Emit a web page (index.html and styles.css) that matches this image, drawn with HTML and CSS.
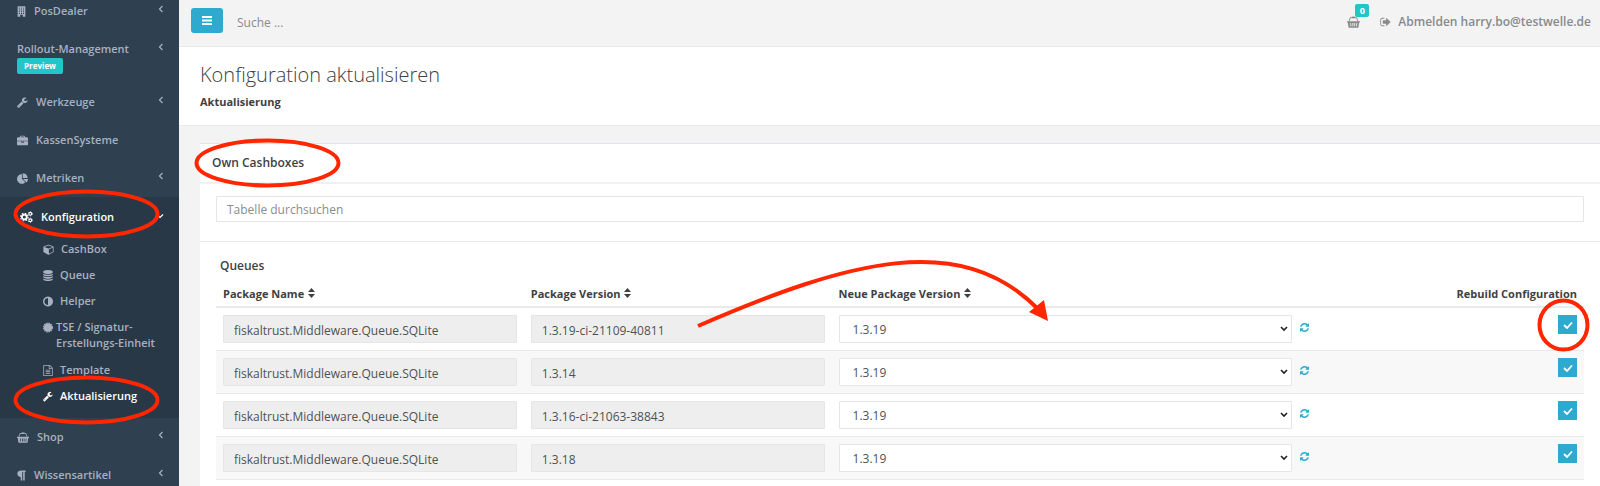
FILE: index.html
```html
<!DOCTYPE html>
<html lang="de">
<head>
<meta charset="utf-8">
<title>Konfiguration aktualisieren</title>
<link rel="stylesheet" href="styles.css">
</head>
<body>
<svg class="defs" aria-hidden="true">
  <symbol id="building" viewBox="0 0 14 16"><path fill-rule="evenodd" d="M1 0h12v16H9v-3H5v3H1zM3 2v1.500h1.500V2zm3.200 0v1.500h1.500V2zm3.200 0v1.500h1.500V2zM3 4.800v1.500h1.500V4.800zm3.200 0v1.500h1.500V4.800zm3.200 0v1.500h1.500V4.800zM3 7.600v1.500h1.500V7.600zm3.200 0v1.500h1.500V7.600zm3.200 0v1.500h1.500V7.600zM3 10.400v1.500h1.500v-1.500zm3.200 0v1.500h1.500v-1.500zm3.200 0v1.500h1.500v-1.500z"/></symbol>
  <symbol id="wrench" viewBox="64 64 1728 1728"><path d="M448 1472q0-26-19-45t-45-19-45 19-19 45 19 45 45 19 45-19 19-45zm644-420l-682 682q-37 37-90 37-52 0-91-37l-106-108q-38-36-38-90 0-53 38-91l681-681q39 98 114.500 173.500t173.500 114.500zm634-435q0 39-23 106-47 134-164.500 217.500t-258.500 83.500q-185 0-316.500-131.500t-131.500-316.500 131.500-316.500 316.500-131.500q58 0 121.500 16.500t107.500 46.500q16 11 16 28t-16 28l-293 169v224l193 107q5-3 79-48.500t135.500-81 70.500-35.500q15 0 23.500 10t8.500 25z"/></symbol>
  <symbol id="briefcase" viewBox="0 -128 1792 1792"><path d="M640 256h512v-128h-512v128zm1152 640v480q0 66-47 113t-113 47h-1472q-66 0-113-47t-47-113v-480h672v160q0 26 19 45t45 19h320q26 0 45-19t19-45v-160h672zm-768 0v128h-256v-128h256zm768-480v384h-1792v-384q0-66 47-113t113-47h352v-160q0-40 28-68t68-28h576q40 0 68 28t28 68v160h352q66 0 113 47t47 113z"/></symbol>
  <symbol id="pie" viewBox="0 -32 1728 1728"><path d="M768 890l546 546q-106 108-247.500 168t-298.500 60q-209 0-385.500-103t-279.500-279.500-103-385.500 103-385.500 279.500-279.500 385.500-103v762zm187 6h773q0 157-60 298.500t-168 247.500zm709-128h-768v-768q209 0 385.500 103t279.500 279.500 103 385.500z"/></symbol>
  <symbol id="cogs" viewBox="0 0 24 22"><g fill="none" stroke="currentColor"><circle cx="8" cy="11" r="4.500" stroke-width="3.400"/><circle cx="8" cy="11" r="7" stroke-width="2" stroke-dasharray="2.900 2.600"/><circle cx="19" cy="5" r="2.600" stroke-width="2"/><circle cx="19" cy="5" r="4" stroke-width="1.200" stroke-dasharray="2 2.190"/><circle cx="19" cy="17" r="2.600" stroke-width="2"/><circle cx="19" cy="17" r="4" stroke-width="1.200" stroke-dasharray="2 2.190"/></g></symbol>
  <symbol id="cube" viewBox="-32 32 1728 1792"><path d="M896 1629l640-349v-636l-640 233v752zm-64-865l698-254-698-254-698 254zm832-252v768q0 35-18 65t-49 47l-704 384q-28 16-61 16t-61-16l-704-384q-31-17-49-47t-18-65v-768q0-40 23-73t61-47l704-256q22-8 44-8t44 8l704 256q38 14 61 47t23 73z"/></symbol>
  <symbol id="database" viewBox="128 0 1536 1792"><path d="M896 768q237 0 443-43t325-127v170q0 69-103 128t-280 93.500-385 34.500-385-34.500-280-93.500-103-128v-170q119 84 325 127t443 43zm0 768q237 0 443-43t325-127v170q0 69-103 128t-280 93.500-385 34.500-385-34.500-280-93.500-103-128v-170q119 84 325 127t443 43zm0-384q237 0 443-43t325-127v170q0 69-103 128t-280 93.500-385 34.500-385-34.500-280-93.500-103-128v-170q119 84 325 127t443 43zm0-1152q208 0 385 34.500t280 93.500 103 128v128q0 69-103 128t-280 93.500-385 34.500-385-34.500-280-93.500-103-128v-128q0-69 103-128t280-93.500 385-34.500z"/></symbol>
  <symbol id="adjust" viewBox="128 128 1536 1536"><path d="M896 1440v-1088q-148 0-273 73t-198 198-73 273 73 273 198 198 273 73zm768-544q0 209-103 385.500t-279.500 279.500-385.500 103-385.500-103-279.500-279.500-103-385.500 103-385.500 279.500-279.500 385.500-103 385.500 103 279.500 279.500 103 385.500z"/></symbol>
  <symbol id="certificate" viewBox="0 0 16 16"><circle cx="8" cy="8" r="6.500"/><circle cx="8" cy="8" r="7" fill="none" stroke="currentColor" stroke-width="2" stroke-dasharray="2.400 1.265"/></symbol>
  <symbol id="file" viewBox="128 0 1536 1792"><path d="M1596 380q28 28 48 76t20 88v1152q0 40-28 68t-68 28h-1344q-40 0-68-28t-28-68v-1600q0-40 28-68t68-28h896q40 0 88 20t76 48zm-444-244v376h376q-10-29-22-41l-313-313q-12-12-41-22zm384 1528v-1024h-416q-40 0-68-28t-28-68v-416h-768v1536h1280zm-1024-864q0-14 9-23t23-9h704q14 0 23 9t9 23v64q0 14-9 23t-23 9h-704q-14 0-23-9t-9-23v-64zm736 224q14 0 23 9t9 23v64q0 14-9 23t-23 9h-704q-14 0-23-9t-9-23v-64q0-14 9-23t23-9h704zm0 256q14 0 23 9t9 23v64q0 14-9 23t-23 9h-704q-14 0-23-9t-9-23v-64q0-14 9-23t23-9h704z"/></symbol>
  <symbol id="basket" viewBox="0 0 24 22"><path fill-rule="evenodd" d="M0 9.500h24v2.500h-1.500L21 21.500H3L1.500 12H0zM6 13l.5 6h1.600l-.5-6zm4 0v6h1.600v-6zm3.400 0v6H15v-6zm4 0l-.5 6h1.600l.5-6z"/><path d="M4 9.500L6 3h12l2 6.500" fill="none" stroke="currentColor" stroke-width="1.700"/><path d="M9 1h6v3H9z"/></symbol>
  <symbol id="paragraph" viewBox="260 64 1280 1664"><path d="M1534 189v73q0 29-18.500 61t-42.500 32q-50 0-54 1-26 6-32 31-3 11-3 64v1152q0 25-18 43t-43 18h-108q-25 0-43-18t-18-43v-1218h-143v1218q0 25-17.500 43t-43.500 18h-108q-26 0-43.500-18t-17.500-43v-496q-147-12-245-59-126-58-192-179-64-117-64-259 0-166 88-286 88-118 209-159 111-37 417-37h479q25 0 43 18t18 43z"/></symbol>
  <symbol id="chevron" viewBox="0 0 6 8"><path d="M4.500 1L1.500 4l3 3" fill="none" stroke="currentColor" stroke-width="1.200"/></symbol>
  <symbol id="chevron-down" viewBox="0 0 8 6"><path d="M1 1.500l3 3 3-3" fill="none" stroke="currentColor" stroke-width="1.200"/></symbol>
  <symbol id="bars" viewBox="0 0 12 11"><path d="M1 1h10v2H1zM1 4.500h10v2H1zM1 8h10v2H1z"/></symbol>
  <symbol id="sign-out" viewBox="64 128 1600 1536"><path d="M704 1440q0 4 1 20t.5 26.500-3 23.500-10 19.500-20.500 6.500h-320q-119 0-203.500-84.500t-84.500-203.500v-704q0-119 84.500-203.500t203.500-84.500h320q13 0 22.500 9.500t9.500 22.500q0 4 1 20t.5 26.500-3 23.500-10 19.500-20.500 6.500h-320q-66 0-113 47t-47 113v704q0 66 47 113t113 47h312l11.500 1 11.500 3 8 5.500 7 9 2 13.500zm928-544q0 26-19 45l-544 544q-19 19-45 19t-45-19-19-45v-288h-448q-26 0-45-19t-19-45v-384q0-26 19-45t45-19h448v-288q0-26 19-45t45-19 45 19l544 544q19 19 19 45z"/></symbol>
  <symbol id="sort" viewBox="0 0 7 10"><path d="M0 4l3.500-4L7 4zM0 6h7l-3.500 4z"/></symbol>
  <symbol id="refresh" viewBox="128 128 1536 1536"><path d="M1639 1056q0 5-1 7-64 268-268 434.500t-478 166.500q-146 0-282.500-55t-243.500-157l-129 129q-19 19-45 19t-45-19-19-45v-448q0-26 19-45t45-19h448q26 0 45 19t19 45-19 45l-137 137q71 66 161 102t187 36q134 0 250-65t186-179q11-17 53-117 8-23 30-23h192q13 0 22.500 9.500t9.500 22.500zm25-800v448q0 26-19 45t-45 19h-448q-26 0-45-19t-19-45 19-45l138-138q-148-137-349-137-134 0-250 65t-186 179q-11 17-53 117-8 23-30 23h-199q-13 0-22.500-9.500t-9.500-22.500v-7q65-268 270-434.500t480-166.500q146 0 284 55.500t245 156.500l130-129q19-19 45-19t45 19 19 45z"/></symbol>
</svg>

<div class="app">
  <nav class="sidebar">
    <ul class="menu">
      <li class="first"><a href="#"><svg class="icon narrow"><use href="#building"/></svg><span>PosDealer</span><svg class="arrow"><use href="#chevron"/></svg></a></li>
      <li class="tagged"><a href="#"><span>Rollout-Management<br><span class="label">Preview</span></span><svg class="arrow"><use href="#chevron"/></svg></a></li>
      <li><a href="#"><svg class="icon"><use href="#wrench"/></svg><span>Werkzeuge</span><svg class="arrow"><use href="#chevron"/></svg></a></li>
      <li><a href="#"><svg class="icon"><use href="#briefcase"/></svg><span>KassenSysteme</span></a></li>
      <li><a href="#"><svg class="icon"><use href="#pie"/></svg><span>Metriken</span><svg class="arrow"><use href="#chevron"/></svg></a></li>
      <li class="active">
        <a href="#"><svg class="icon cogs"><use href="#cogs"/></svg><span>Konfiguration</span><svg class="arrow down"><use href="#chevron-down"/></svg></a>
        <ul class="submenu">
          <li><a href="#"><svg class="icon"><use href="#cube"/></svg><span>CashBox</span></a></li>
          <li><a href="#"><svg class="icon small"><use href="#database"/></svg><span>Queue</span></a></li>
          <li><a href="#"><svg class="icon small"><use href="#adjust"/></svg><span>Helper</span></a></li>
          <li><a href="#" class="long"><svg class="icon small"><use href="#certificate"/></svg><span>TSE / Signatur-<br>Erstellungs-Einheit</span></a></li>
          <li><a href="#"><svg class="icon small"><use href="#file"/></svg><span>Template</span></a></li>
          <li class="current"><a href="#"><svg class="icon small"><use href="#wrench"/></svg><span>Aktualisierung</span></a></li>
        </ul>
      </li>
      <li><a href="#"><svg class="icon wide"><use href="#basket"/></svg><span>Shop</span><svg class="arrow"><use href="#chevron"/></svg></a></li>
      <li><a href="#"><svg class="icon narrow"><use href="#paragraph"/></svg><span>Wissensartikel</span><svg class="arrow"><use href="#chevron"/></svg></a></li>
    </ul>
  </nav>

  <main class="main">
    <header class="topbar">
      <button class="toggle" type="button" aria-label="Menü"><svg><use href="#bars"/></svg></button>
      <input class="search" type="text" placeholder="Suche ..." aria-label="Suche">
      <a class="cart" href="#" aria-label="Warenkorb"><svg><use href="#basket"/></svg><span class="count">0</span></a>
      <a class="logout" href="#"><svg><use href="#sign-out"/></svg>Abmelden harry.bo@testwelle.de</a>
    </header>

    <section class="heading">
      <h1>Konfiguration aktualisieren</h1>
      <strong>Aktualisierung</strong>
    </section>

    <section class="panel">
      <h2 class="panel-title">Own Cashboxes</h2>
      <div class="filter"><input type="text" placeholder="Tabelle durchsuchen" aria-label="Tabelle durchsuchen"></div>
      <div class="content">
        <h3>Queues</h3>
        <table>
          <colgroup><col class="c-name"><col class="c-version"><col class="c-new"><col></colgroup>
          <thead><tr>
            <th>Package Name <svg class="sort"><use href="#sort"/></svg></th>
            <th>Package Version <svg class="sort"><use href="#sort"/></svg></th>
            <th>Neue Package Version <svg class="sort"><use href="#sort"/></svg></th>
            <th class="end">Rebuild Configuration</th>
          </tr></thead>
          <tbody>
            <tr>
              <td><input class="field" disabled value="fiskaltrust.Middleware.Queue.SQLite" aria-label="Package Name"></td>
              <td><input class="field" disabled value="1.3.19-ci-21109-40811" aria-label="Package Version"></td>
              <td><div class="pick"><select aria-label="Neue Package Version"><option>1.3.19</option></select><button type="button" aria-label="Aktualisieren"><svg><use href="#refresh"/></svg></button></div></td>
              <td class="end"><input class="check" type="checkbox" checked aria-label="Rebuild Configuration"></td>
            </tr>
            <tr>
              <td><input class="field" disabled value="fiskaltrust.Middleware.Queue.SQLite" aria-label="Package Name"></td>
              <td><input class="field" disabled value="1.3.14" aria-label="Package Version"></td>
              <td><div class="pick"><select aria-label="Neue Package Version"><option>1.3.19</option></select><button type="button" aria-label="Aktualisieren"><svg><use href="#refresh"/></svg></button></div></td>
              <td class="end"><input class="check" type="checkbox" checked aria-label="Rebuild Configuration"></td>
            </tr>
            <tr>
              <td><input class="field" disabled value="fiskaltrust.Middleware.Queue.SQLite" aria-label="Package Name"></td>
              <td><input class="field" disabled value="1.3.16-ci-21063-38843" aria-label="Package Version"></td>
              <td><div class="pick"><select aria-label="Neue Package Version"><option>1.3.19</option></select><button type="button" aria-label="Aktualisieren"><svg><use href="#refresh"/></svg></button></div></td>
              <td class="end"><input class="check" type="checkbox" checked aria-label="Rebuild Configuration"></td>
            </tr>
            <tr>
              <td><input class="field" disabled value="fiskaltrust.Middleware.Queue.SQLite" aria-label="Package Name"></td>
              <td><input class="field" disabled value="1.3.18" aria-label="Package Version"></td>
              <td><div class="pick"><select aria-label="Neue Package Version"><option>1.3.19</option></select><button type="button" aria-label="Aktualisieren"><svg><use href="#refresh"/></svg></button></div></td>
              <td class="end"><input class="check" type="checkbox" checked aria-label="Rebuild Configuration"></td>
            </tr>
          </tbody>
        </table>
      </div>
    </section>
  </main>

  <svg class="marks" viewBox="0 0 1600 486" aria-hidden="true">
    <g fill="none" stroke="#ff2600" stroke-width="4">
      <ellipse cx="86.500" cy="214" rx="71" ry="22.500"/>
      <ellipse cx="86.500" cy="400" rx="71" ry="22.500"/>
      <ellipse cx="267.500" cy="163" rx="71" ry="22.500"/>
      <ellipse cx="1563.500" cy="325" rx="24" ry="24.500"/>
      <path d="M698 326C850 260 960 231 1037 308"/>
    </g>
    <path fill="#ff2600" d="M1048 321l-19-9 15-12z"/>
  </svg>
</div>
</body>
</html>
```
FILE: styles.css
```css
* { box-sizing: border-box; }

body {
  margin: 0;
  background: #f3f3f4;
  color: #4f5254;
  font: 12px/16px "Open Sans", sans-serif;
}

a { color: inherit; text-decoration: none; }
ul { list-style: none; margin: 0; padding: 0; }
h1, h2, h3 { margin: 0; }
svg { fill: currentColor; flex: none; }
input, select, button { font: inherit; color: inherit; }

.defs { position: absolute; width: 0; height: 0; }

.app {
  position: relative;
  display: flex;
  height: 100vh;
  overflow: hidden;
}

/* Sidebar */
.sidebar {
  flex: none;
  width: 179px;
  background: #2f4050;
  color: #a7b1c2;
  font-size: 11px;
  font-weight: 600;
}

.menu a {
  display: flex;
  align-items: flex-start;
  gap: 8px;
  padding: 11px 15px 11px 17px;
}

.menu .first > a { padding-top: 3px; }
.menu .tagged > a { padding-bottom: 9px; }
.icon { width: 11px; height: 11px; margin-top: 3px; }
.icon.narrow { width: 9px; }
.icon.small { width: 10px; }
.icon.wide { width: 12px; }
.icon.cogs { width: 13px; height: 12px; margin-top: 2px; }
.arrow { width: 6px; height: 8px; margin: 2px 0 0 auto; }
.arrow.down { width: 8px; height: 6px; margin-top: 4px; }

.label {
  display: inline-block;
  padding: 0 7px;
  border-radius: 2px;
  background: #23c6c8;
  color: #fff;
  font-size: 8px;
  font-weight: 700;
  line-height: 16px;
}

.active { background: #293846; padding: 1px 0 9px; }
.active > a { color: #fff; padding-left: 20px; }
.submenu a { gap: 7px; padding: 5px 5px 5px 43px; }
.submenu .long { gap: 3px; padding-bottom: 6px; }
.submenu .current { color: #fff; }

/* Top bar */
.main { flex: 1; min-width: 0; }

.topbar {
  display: flex;
  align-items: center;
  height: 47px;
  padding: 0 9px 6px 12px;
  border-bottom: 1px solid #e7eaec;
  color: #888a8c;
}

.toggle {
  display: flex;
  align-items: center;
  justify-content: center;
  width: 32px;
  height: 25px;
  padding: 0;
  border: 0;
  border-radius: 3px;
  background: #2eaacf;
  color: #fff;
}

.toggle svg { width: 12px; height: 11px; }

.search {
  flex: 1;
  min-width: 0;
  margin-top: 5px;
  padding: 0 14px;
  border: 0;
  background: none;
}

input::placeholder { color: #8a8c8e; opacity: 1; }

.cart { position: relative; margin: 4px 20px 0 0; line-height: 0; }
.cart svg { width: 13px; height: 12px; }

.count {
  position: absolute;
  left: 8px;
  bottom: 11px;
  width: 14px;
  border-radius: 2px;
  background: #23c6c8;
  color: #fff;
  font-size: 9px;
  font-weight: 700;
  line-height: 13px;
  text-align: center;
}

.logout {
  display: flex;
  align-items: center;
  gap: 7px;
  margin-top: 4px;
  font-weight: 600;
}

.logout svg { width: 11px; height: 10px; }

/* Page heading */
.heading {
  padding: 14px 21px 15px;
  border-bottom: 1px solid #e7eaec;
  background: #fff;
  color: #3e4144;
}

.heading h1 {
  margin-bottom: 5px;
  font-size: 20px;
  font-weight: 300;
  line-height: 28px;
}

.heading strong { display: block; font-size: 11px; font-weight: 700; }

/* Panel */
.panel {
  margin: 17px 0 0 21px;
  border-top: 1px solid #e0e3e8;
  background: #fff;
}

.panel-title {
  padding: 11px 12px;
  border-bottom: 2px solid #f1f1f2;
  color: #3e4144;
  font-size: 12px;
  font-weight: 600;
}

.filter { padding: 12px 16px 19px; border-bottom: 1px solid #e7eaec; }

.filter input {
  display: block;
  width: 100%;
  height: 26px;
  padding: 0 10px;
  border: 1px solid #e5e6e7;
  background: #fff;
}

.content { padding: 16px 16px 14px; }
.content h3 { padding: 0 4px; font-size: 12px; font-weight: 600; color: #3e4144; }

table { width: 100%; border-collapse: collapse; table-layout: fixed; }
.c-name, .c-version { width: 22.5%; }
.c-new { width: 35.5%; }
th { padding: 12px 7px 4px; border-bottom: 2px solid #e9eaeb; color: #3e4144; font-size: 11px; font-weight: 700; text-align: left; }
td { padding: 7px; border-bottom: 1px solid #e7eaec; vertical-align: top; }
tbody tr:nth-child(even) { background: #f8f8f8; }
.end { text-align: right; }
.sort { width: 7px; height: 10px; margin-left: 1px; }

.field, .pick select {
  display: block;
  width: 100%;
  height: 28px;
  padding: 2px 10px 0;
  border: 1px solid #e5e6e7;
  border-radius: 1px;
}

.field { background: #eee; color: #4f5254; }
.pick { display: flex; gap: 8px; }

.pick select {
  flex: 1;
  appearance: none;
  padding: 2px 13px 0;
  background: #fff url("data:image/svg+xml,%3Csvg xmlns='http://www.w3.org/2000/svg' viewBox='0 0 8 6'%3E%3Cpath d='M1 1l3 3 3-3' fill='none' stroke='%23222' stroke-width='1.600'/%3E%3C/svg%3E") no-repeat right 3px center / 8px 6px;
}

.pick button {
  display: flex;
  padding: 8px 1px 0 0;
  border: 0;
  background: none;
  color: #2eaacf;
}

.pick button svg { width: 9px; height: 9px; }

.check {
  appearance: none;
  display: inline-block;
  width: 19px;
  height: 19px;
  margin: 0;
  vertical-align: top;
  background: #2eaacf url("data:image/svg+xml,%3Csvg xmlns='http://www.w3.org/2000/svg' viewBox='0 0 10 8'%3E%3Cpath d='M1 4l3 3 5-5.500' fill='none' stroke='%23fff' stroke-width='1.800'/%3E%3C/svg%3E") no-repeat center / 10px 8px;
}

/* Hand-drawn highlights above the page */
.marks {
  position: absolute;
  top: 0;
  left: 0;
  width: 1600px;
  height: 486px;
  pointer-events: none;
}
```
